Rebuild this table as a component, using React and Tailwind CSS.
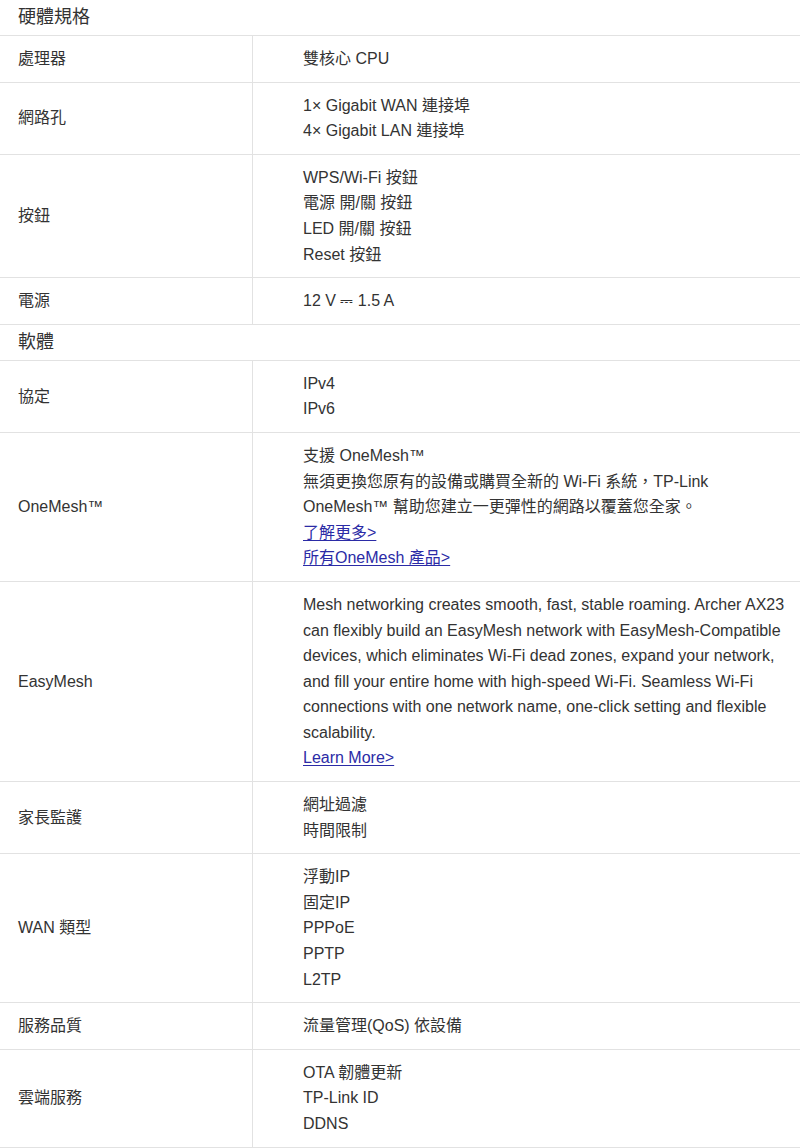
const hardware = [
  { label: "處理器", lines: ["雙核心 CPU"] },
  { label: "網路孔", lines: ["1× Gigabit WAN 連接埠", "4× Gigabit LAN 連接埠"] },
  { label: "按鈕", lines: ["WPS/Wi-Fi 按鈕", "電源 開/關 按鈕", "LED 開/關 按鈕", "Reset 按鈕"] },
  { label: "電源", lines: ["12 V ⎓ 1.5 A"] },
];

const linkCls = "text-[#2b2ba6] underline underline-offset-2";

const software = [
  { label: "協定", lines: ["IPv4", "IPv6"] },
  {
    label: "OneMesh™",
    lines: [
      "支援 OneMesh™",
      "無須更換您原有的設備或購買全新的 Wi-Fi 系統，TP-Link OneMesh™ 幫助您建立一更彈性的網路以覆蓋您全家。",
      <a href="#" className={linkCls}>了解更多&gt;</a>,
      <a href="#" className={linkCls}>所有OneMesh 產品&gt;</a>,
    ],
  },
  {
    label: "EasyMesh",
    lines: [
      "Mesh networking creates smooth, fast, stable roaming. Archer AX23 can flexibly build an EasyMesh network with EasyMesh-Compatible devices, which eliminates Wi-Fi dead zones, expand your network, and fill your entire home with high-speed Wi-Fi. Seamless Wi-Fi connections with one network name, one-click setting and flexible scalability.",
      <a href="#" className={linkCls}>Learn More&gt;</a>,
    ],
  },
  { label: "家長監護", lines: ["網址過濾", "時間限制"] },
  { label: "WAN 類型", lines: ["浮動IP", "固定IP", "PPPoE", "PPTP", "L2TP"] },
  { label: "服務品質", lines: ["流量管理(QoS) 依設備"] },
  { label: "雲端服務", lines: ["OTA 韌體更新", "TP-Link ID", "DDNS"] },
];

function SectionHeader({ title }) {
  return (
    <div className="border-b border-[#e2e2e2] h-[36px] pl-[18px] flex items-center text-[18px] text-[#333]">
      {title}
    </div>
  );
}

function SpecRow({ label, lines }) {
  return (
    <div className="flex border-b border-[#e2e2e2]">
      <div className="w-[253px] shrink-0 border-r border-[#e2e2e2] pl-[18px] py-[10px] flex items-center">
        {label}
      </div>
      <div className="flex-1 pl-[50px] pr-[15px] py-[10px]">
        {lines.map((line, i) => (
          <div key={i}>{line}</div>
        ))}
      </div>
    </div>
  );
}

export default function App() {
  return (
    <div
      className="w-[800px] bg-white text-[#333] text-[16px] leading-[1.6]"
      style={{ fontFamily: '"Liberation Sans", Arial, "Noto Sans CJK TC", sans-serif' }}
    >
      <SectionHeader title="硬體規格" />
      {hardware.map((r) => (
        <SpecRow key={r.label} {...r} />
      ))}
      <SectionHeader title="軟體" />
      {software.map((r) => (
        <SpecRow key={r.label} {...r} />
      ))}
    </div>
  );
}
